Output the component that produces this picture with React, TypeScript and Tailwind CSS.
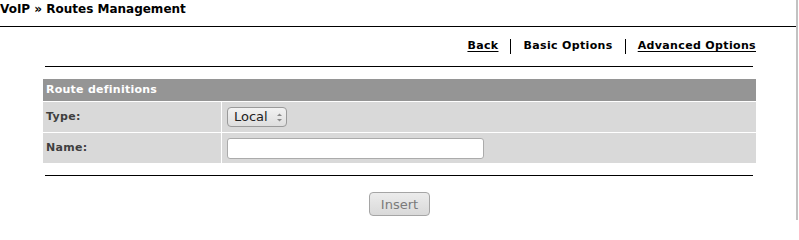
import React from "react";

const font = { fontFamily: '"DejaVu Sans", Verdana, sans-serif' };

function Sep() {
  return <span className="inline-block w-px h-[15px] bg-black mx-[12px]" />;
}

function UpDown() {
  return (
    <svg width="7" height="11" viewBox="0 0 7 11" className="ml-[8px]">
      <path d="M1 4 L3.5 1.5 L6 4 Z" fill="#8a8a8a" />
      <path d="M1 7 L3.5 9.5 L6 7 Z" fill="#8a8a8a" />
    </svg>
  );
}

export default function App() {
  return (
    <div
      className="w-[799px] h-[220px] bg-white flex overflow-hidden"
      style={font}
    >
      <div className="w-[796px] flex flex-col">
        {/* Page title */}
        <div className="h-[27px] border-b border-black pt-[2px] text-[12px] leading-[15px] font-bold text-black">
          VoIP &raquo; Routes Management
        </div>

        <div className="ml-[43px] w-[713px] flex flex-col">
          {/* Links */}
          <div className="h-[39px] flex items-center justify-end pr-[-1px] text-[11px] tracking-[0.35px] font-bold text-black">
            <a className="underline underline-offset-2" href="#">
              Back
            </a>
            <Sep />
            <span>Basic Options</span>
            <Sep />
            <a className="underline underline-offset-2" href="#">
              Advanced Options
            </a>
          </div>
          <div className="ml-[2px] w-[708px] h-px bg-black" />

          {/* Route definitions */}
          <div className="mt-[12px] flex flex-col gap-px bg-white">
            <div className="h-[22px] bg-[#959595] text-white text-[11px] tracking-[0.25px] font-bold flex items-center pl-[3px]">
              Route definitions
            </div>
            <div className="grid grid-cols-[178px_1fr] gap-x-px gap-y-px">
              <div className="h-[30px] bg-[#d9d9d9] flex items-center pl-[3px] text-[11px] tracking-[0.3px] font-bold text-[#3f3f3f]">
                Type:
              </div>
              <div className="h-[30px] bg-[#d9d9d9] flex items-center pl-[5px]">
                <div className="w-[60px] h-[20px] rounded-[4px] border border-[#9a9a9a] bg-gradient-to-b from-[#f2f2f2] to-[#dedede] flex items-center pl-[6px] text-[13px] text-[#222]">
                  Local
                  <UpDown />
                </div>
              </div>
              <div className="h-[30px] bg-[#d9d9d9] flex items-center pl-[3px] text-[11px] tracking-[0.3px] font-bold text-[#3f3f3f]">
                Name:
              </div>
              <div className="h-[30px] bg-[#d9d9d9] flex items-center pl-[5px]">
                <input
                  type="text"
                  className="w-[257px] h-[21px] rounded-[3px] border border-[#ababab] bg-white outline-none"
                />
              </div>
            </div>
          </div>

          <div className="mt-[12px] ml-[2px] w-[708px] h-px bg-black" />

          {/* Insert */}
          <div className="mt-[16px] flex justify-center">
            <button className="w-[61px] h-[24px] rounded-[4px] border border-[#a5a5a5] bg-gradient-to-b from-[#ececec] to-[#d9d9d9] text-[13px] text-[#7a7a7a] leading-none">
              Insert
            </button>
          </div>
        </div>
      </div>
      <div className="w-[2px] h-full bg-[#c2c2c2]" />
    </div>
  );
}
